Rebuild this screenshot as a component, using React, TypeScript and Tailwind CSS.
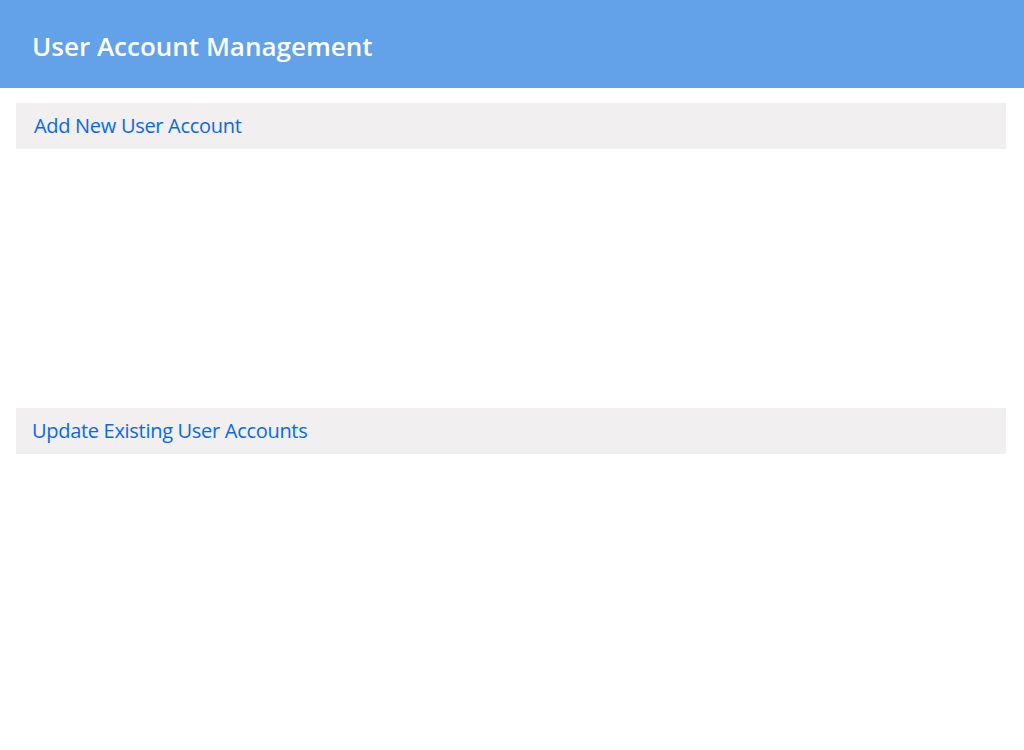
const sections = [
  { title: "Add New User Account", pad: "pl-[18px]" },
  { title: "Update Existing User Accounts", pad: "pl-4" },
]

export default function App() {
  return (
    <div className="min-h-[750px] bg-white font-['Open_Sans',sans-serif]">
      <header className="flex h-[88px] items-center bg-[#63a2e8] px-8 pt-1">
        <h1 className="text-[26px] font-semibold tracking-[0px] text-white">
          User Account Management
        </h1>
      </header>

      <main className="flex flex-col gap-[259px] pt-[15px] pl-4 pr-[18px]">
        {sections.map((section) => (
          <section
            key={section.title}
            className={`flex h-[46px] items-center bg-[#f1eff0] ${section.pad}`}
          >
            <h2 className="text-[20px] tracking-[-0.3px] text-[#0b69e0]">
              {section.title}
            </h2>
          </section>
        ))}
      </main>
    </div>
  )
}
